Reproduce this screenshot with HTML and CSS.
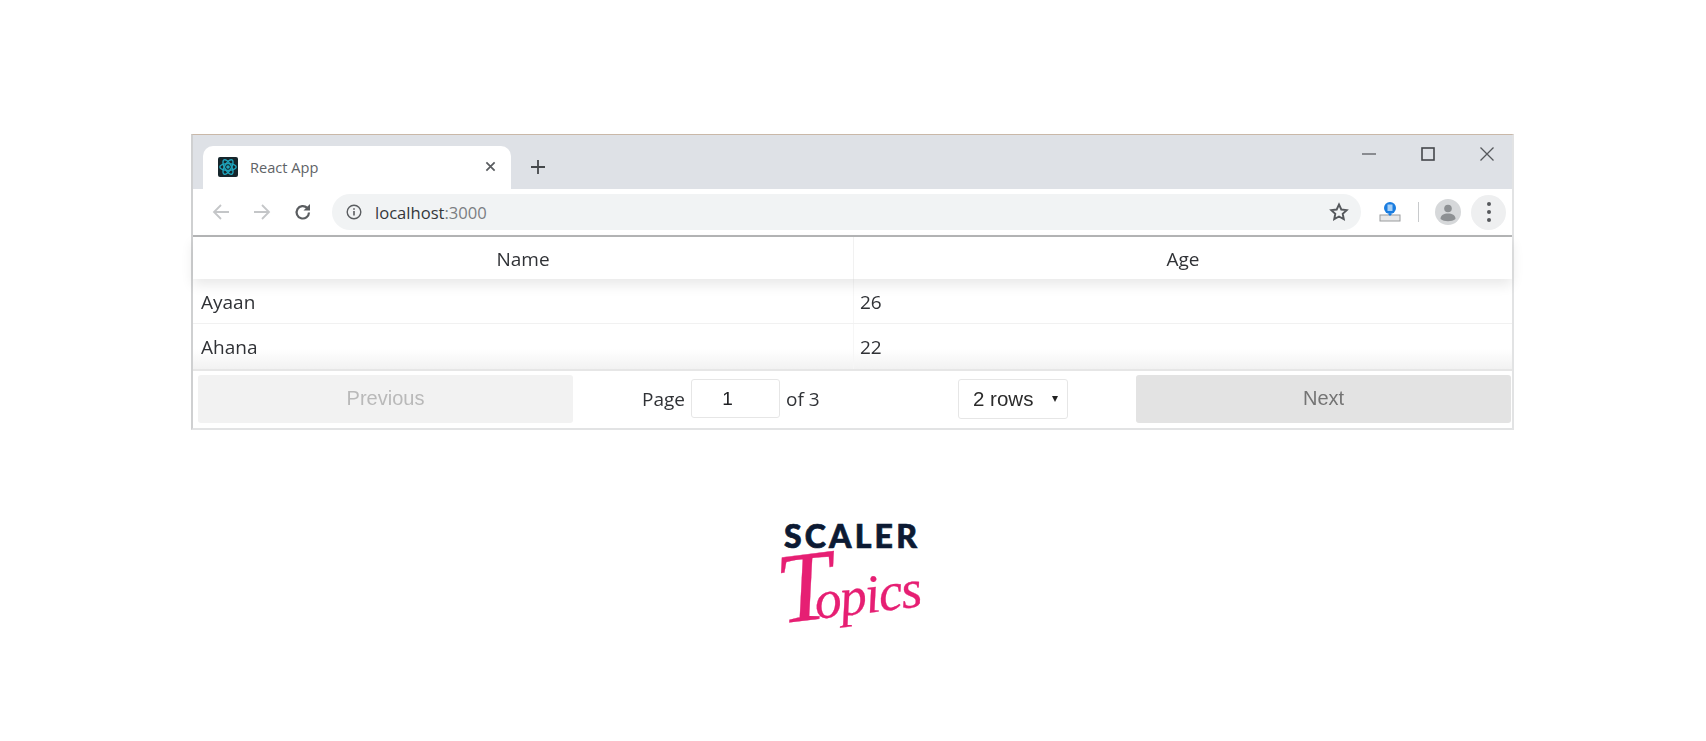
FILE: index.html
```html
<!DOCTYPE html>
<html lang="en">
<head>
<meta charset="utf-8">
<title>React Table</title>
<link rel="stylesheet" href="styles.css">
</head>
<body>
<main class="page">
  <section class="window">
    <div class="tabstrip">
      <div class="tab">
        <svg class="favicon" viewBox="0 0 20 20"><rect width="20" height="20" rx="2" fill="#16262c"/><g fill="none" stroke="#1fa5bd" stroke-width="1.4"><ellipse cx="10" cy="10" rx="8.2" ry="3.4"/><ellipse cx="10" cy="10" rx="8.2" ry="3.4" transform="rotate(60 10 10)"/><ellipse cx="10" cy="10" rx="8.2" ry="3.4" transform="rotate(120 10 10)"/></g><circle cx="10" cy="10" r="1.8" fill="#1fa5bd"/></svg>
        <span class="tab-title">React App</span>
        <svg class="tab-close" viewBox="0 0 12 12"><path d="M1.5 1.5l9 9M10.5 1.5l-9 9" stroke="#5a5d60" stroke-width="1.9" fill="none"/></svg>
      </div>
      <svg class="newtab" viewBox="0 0 16 16"><path d="M8 1v14M1 8h14" stroke="#45484b" stroke-width="1.8" fill="none"/></svg>
      <div class="winctl">
        <svg class="ctl" viewBox="0 0 14 14"><path d="M0 7h14" stroke="#5b5e62" stroke-width="1.3"/></svg>
        <svg class="ctl" viewBox="0 0 14 14"><rect x="1" y="1" width="12" height="12" fill="none" stroke="#44474b" stroke-width="1.6"/></svg>
        <svg class="ctl" viewBox="0 0 14 14"><path d="M.5.5l13 13M13.500.5l-13 13" stroke="#55585c" stroke-width="1.3" fill="none"/></svg>
      </div>
    </div>
    <div class="toolbar">
      <svg class="nav" viewBox="0 0 20 20"><path d="M18 10H3M10 3l-7 7 7 7" stroke="#c4c6c8" stroke-width="1.8" fill="none"/></svg>
      <svg class="nav" viewBox="0 0 20 20"><path d="M2 10h15M10 3l7 7-7 7" stroke="#c4c6c8" stroke-width="1.8" fill="none"/></svg>
      <svg class="nav" viewBox="0 0 20 20"><path d="M16 10.500a6.200 6.200 0 1 1-1.800-4.600" stroke="#5a5d60" stroke-width="2.200" fill="none"/><path d="M17 2v6.500h-6.500z" fill="#5a5d60"/></svg>
      <div class="omnibox">
        <svg class="info" viewBox="0 0 16 16"><circle cx="8" cy="8" r="6.800" fill="none" stroke="#5a5d60" stroke-width="1.400"/><path d="M8 7v4.500M8 4.200v1.600" stroke="#5a5d60" stroke-width="1.600"/></svg>
        <span class="url">localhost<span class="url-port">:3000</span></span>
        <svg class="star" viewBox="0 0 20 20"><path d="M10 2.500l2.300 5 5.400.6-4 3.700 1.100 5.400-4.800-2.700-4.800 2.700 1.100-5.400-4-3.700 5.400-.6z" fill="none" stroke="#55585c" stroke-width="1.900"/></svg>
      </div>
      <svg class="ext" viewBox="0 0 22 22"><circle cx="11" cy="7" r="6" fill="#1a7de0"/><rect x="8.500" y="3.500" width="5" height="6.500" fill="#a8d0f5"/><rect x="1" y="14" width="20" height="6" fill="#e8e8e8" stroke="#9a9c9e" stroke-width="1"/><path d="M9 13l2 2 2-2z" fill="#1a7de0"/></svg>
      <span class="sep"></span>
      <svg class="avatar" viewBox="0 0 26 26"><circle cx="13" cy="13" r="13" fill="#d6d8da"/><circle cx="13" cy="9.500" r="3.800" fill="#8d9093"/><path d="M5.500 20c0-4 3.500-5.500 7.500-5.500s7.500 1.500 7.500 5.500c-2 1.500-4.500 2.200-7.500 2.200s-5.500-.7-7.500-2.200z" fill="#8d9093"/></svg>
      <div class="menu"><i></i><i></i><i></i></div>
    </div>
    <div class="table">
      <div class="thead">
        <div class="th th-first">Name</div>
        <div class="th">Age</div>
      </div>
      <div class="tbody">
        <div class="tr tr-line">
          <div class="td td-first">Ayaan</div>
          <div class="td">26</div>
        </div>
        <div class="tr">
          <div class="td td-first">Ahana</div>
          <div class="td">22</div>
        </div>
      </div>
      <div class="pagination">
        <button class="pbtn pbtn-off">Previous</button>
        <div class="pcenter">
          <div class="pageinfo">
            <span>Page</span>
            <span class="pageinput">1</span>
            <span>of 3</span>
          </div>
          <div class="rowsel">2 rows<span class="caret"></span></div>
        </div>
        <button class="pbtn pbtn-next">Next</button>
      </div>
    </div>
  </section>
  <div class="logo">
    <div class="logo-top">SCALER</div>
    <div class="logo-script"><span class="logo-t">T</span>opics</div>
  </div>
</main>
</body>
</html>
```
FILE: styles.css
```css
* { box-sizing: border-box; }
html, body { margin: 0; background: #fff; }
.page {
  width: 1706px;
  height: 741px;
  padding-top: 134px;
  display: flex;
  flex-direction: column;
  align-items: center;
  overflow: hidden;
}
.window {
  width: 1323px;
  height: 296px;
  margin-left: -1px;
  border: 2px solid #e2e3e4;
  border-top: 1px solid #c9b8a8;
  border-left-color: #cfd0d1;
  display: flex;
  flex-direction: column;
  font-family: "Open Sans", "Noto Sans", sans-serif;
  filter: blur(0.5px);
}
.tabstrip {
  height: 54px;
  background: #dee1e6;
  display: flex;
  align-items: flex-start;
  flex: none;
}
.tab {
  width: 308px;
  height: 44px;
  margin: 11px 0 0 10px;
  background: #fff;
  border-radius: 10px 10px 0 0;
  display: flex;
  align-items: center;
  padding: 0 13px 3px 15px;
}
.favicon { width: 20px; height: 20px; flex: none; }
.tab-title { margin-left: 12px; font-size: 14.6px; color: #606367; flex: 1; }
.tab-close { width: 11px; height: 11px; margin-right: 2px; }
.newtab { width: 16px; height: 16px; margin: 24px 0 0 19px; }
.winctl {
  margin-left: auto;
  display: flex;
  gap: 45px;
  padding: 12px 18px 0 0;
}
.ctl { width: 14px; height: 14px; }
.toolbar {
  height: 48px;
  flex: none;
  background: #fff;
  border-bottom: 2px solid #b4b5b6;
  display: flex;
  align-items: center;
  padding: 0 6px 0 18px;
}
.nav { width: 20px; height: 20px; margin-right: 21px; flex: none; }
.nav:nth-child(3) { margin-right: 19px; }
.omnibox {
  width: 1030px;
  height: 36px;
  background: #f1f3f4;
  border-radius: 18px;
  display: flex;
  align-items: center;
  padding: 0 12px 0 14px;
}
.info { width: 16px; height: 16px; flex: none; }
.url { margin-left: 13px; font-size: 16.6px; color: #35383b; flex: 1; }
.url-port { color: #7b7e82; }
.star { width: 20px; height: 20px; }
.ext { width: 22px; height: 22px; margin-left: 18px; flex: none; }
.sep { width: 1px; height: 20px; background: #c8cacc; margin: 0 16px 0 17px; flex: none; }
.avatar { width: 26px; height: 26px; flex: none; }
.menu {
  width: 35px;
  height: 35px;
  margin-left: 10px;
  border-radius: 50%;
  background: #eeeff0;
  display: flex;
  flex-direction: column;
  align-items: center;
  justify-content: center;
  gap: 4px;
  flex: none;
}
.menu i { width: 4px; height: 4px; background: #55585c; border-radius: 50%; }
.table { flex: 1; display: flex; flex-direction: column; min-height: 0; }
.thead {
  height: 42px;
  display: flex;
  flex: none;
  position: relative;
  box-shadow: 0 6px 12px rgba(0, 0, 0, 0.09);
  background: #fff;
}
.th {
  flex: 1;
  text-align: center;
  font-size: 19px;
  line-height: 44px;
  color: #303236;
}
.th-first { flex: none; width: 661px; border-right: 1px solid #f1f1f1; }
.tbody {
  height: 90px;
  flex: none;
  background: linear-gradient(#fff 78%, #f2f2f2 100%);
}
.tr { display: flex; height: 45px; }
.tr-line { border-bottom: 1px solid #f1f1f1; }
.td { flex: 1; padding: 2px 6px 0; font-size: 19px; line-height: 43px; color: #303236; }
.td-first { flex: none; width: 661px; padding-left: 8px; border-right: 1px solid #f6f6f6; }
.pagination {
  flex: 1;
  display: flex;
  align-items: center;
  border-top: 2px solid #e6e6e6;
  padding: 0 1px 2px 5px;
}
.pbtn {
  width: 375px;
  height: 48px;
  flex: none;
  border: none;
  border-radius: 3px;
  font-family: "Liberation Sans", Arial, sans-serif;
  font-size: 20px;
}
.pbtn-off { background: #f2f2f2; color: #b9b9b9; }
.pbtn-next { background: #e3e3e3; color: #747474; }
.pcenter { flex: 1; display: flex; align-items: center; padding-left: 69px; }
.pageinfo { display: flex; align-items: center; gap: 5px; font-size: 19px; color: #303236; width: 316px; }
.pageinput {
  width: 89px;
  height: 39px;
  margin: 0 1px;
  border: 1px solid #e6e6e6;
  border-radius: 3px;
  text-align: center;
  font-family: "Liberation Sans", Arial, sans-serif;
  font-size: 19px;
  line-height: 37px;
  padding-right: 16px;
  color: #202124;
}
.rowsel {
  width: 110px;
  height: 40px;
  border: 1px solid #e6e6e6;
  border-radius: 3px;
  display: flex;
  align-items: center;
  padding-left: 14px;
  font-family: "Liberation Sans", Arial, sans-serif;
  font-size: 20.5px;
  color: #2b2b2b;
}
.caret {
  margin-left: 19px;
  border-left: 3.5px solid transparent;
  border-right: 3.5px solid transparent;
  border-top: 6px solid #222;
}
.logo {
  margin-top: 90px;
  margin-left: -2px;
  width: 150px;
  display: flex;
  flex-direction: column;
  align-items: center;
}
.logo-top {
  font-family: "Lato", "Open Sans", sans-serif;
  font-weight: 900;
  font-size: 32px;
  line-height: 32px;
  letter-spacing: 3.2px;
  color: #0c1a33;
  -webkit-text-stroke: 0.7px #0c1a33;
}
.logo-script {
  margin: -2px 0 0 -7px;
  font-family: "Liberation Serif", serif;
  font-style: italic;
  font-size: 54px;
  line-height: 64px;
  color: #e61f73;
  transform: rotate(-7deg);
  letter-spacing: -1.5px;
  white-space: nowrap;
  -webkit-text-stroke: 0.3px #e61f73;
}
.logo-t { font-size: 100px; line-height: 64px; margin-right: -18px; }
```
